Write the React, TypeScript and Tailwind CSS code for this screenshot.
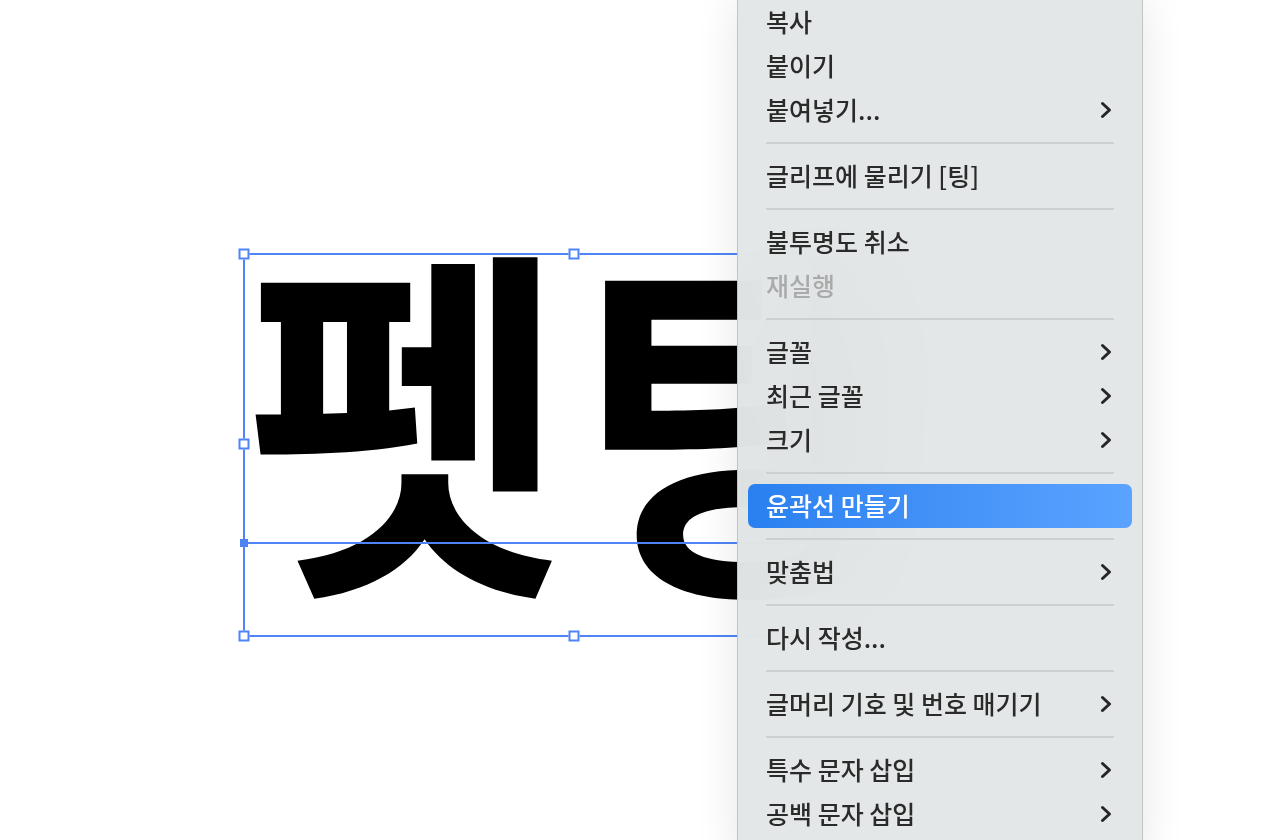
import React from "react";

type Item =
  | { kind: "item"; label: string; sub?: boolean; disabled?: boolean; active?: boolean }
  | { kind: "sep" };

const items: Item[] = [
  { kind: "item", label: "복사" },
  { kind: "item", label: "붙이기" },
  { kind: "item", label: "붙여넣기...", sub: true },
  { kind: "sep" },
  { kind: "item", label: "글리프에 물리기 [팅]" },
  { kind: "sep" },
  { kind: "item", label: "불투명도 취소" },
  { kind: "item", label: "재실행", disabled: true },
  { kind: "sep" },
  { kind: "item", label: "글꼴", sub: true },
  { kind: "item", label: "최근 글꼴", sub: true },
  { kind: "item", label: "크기", sub: true },
  { kind: "sep" },
  { kind: "item", label: "윤곽선 만들기", active: true },
  { kind: "sep" },
  { kind: "item", label: "맞춤법", sub: true },
  { kind: "sep" },
  { kind: "item", label: "다시 작성..." },
  { kind: "sep" },
  { kind: "item", label: "글머리 기호 및 번호 매기기", sub: true },
  { kind: "sep" },
  { kind: "item", label: "특수 문자 삽입", sub: true },
  { kind: "item", label: "공백 문자 삽입", sub: true },
];

function Chevron() {
  return (
    <svg width="12" height="18" viewBox="0 0 12 18" fill="none">
      <path d="M2.5 2.5 L9.5 9 L2.5 15.5" stroke="#262626" strokeWidth="3" strokeLinecap="round" strokeLinejoin="round" />
    </svg>
  );
}

// 선택 상자 핸들 (캔버스 위 자유 배치)
function Handle({ className, filled }: { className: string; filled?: boolean }) {
  return (
    <div
      className={
        (filled
          ? "absolute w-[8px] h-[8px] bg-[#4f84f7] -translate-x-1/2 -translate-y-1/2 "
          : "absolute w-[11px] h-[11px] bg-white border-2 border-[#4f84f7] -translate-x-1/2 -translate-y-1/2 ") + className
      }
    />
  );
}

function ContextMenu() {
  return (
    <div className="absolute left-[737px] top-0 w-[406px] h-[860px] bg-[#e3e6e6]/[0.97] backdrop-blur-3xl border-x border-[#c2c4c4] shadow-[0_0_40px_rgba(0,0,0,0.1)] px-[10px] text-[25px] font-medium">
      {items.map((it, i) =>
        it.kind === "sep" ? (
          <div key={i} className="h-[22px] flex items-center px-[18px]">
            <div className="h-[2px] w-full bg-[#cdd0d0]" />
          </div>
        ) : (
          <div
            key={i}
            className={
              it.active
                ? "h-[44px] flex items-center justify-between pl-[18px] pr-[20px] rounded-[7px] bg-gradient-to-r from-[#2a80f0] to-[#5aa3ff] text-white"
                : it.disabled
                ? "h-[44px] flex items-center justify-between pl-[18px] pr-[20px] text-[#a9abab]"
                : "h-[44px] flex items-center justify-between pl-[18px] pr-[20px] text-[#2a2a2a]"
            }
          >
            <span>{it.label}</span>
            {it.sub && <Chevron />}
          </div>
        )
      )}
    </div>
  );
}

export default function App() {
  return (
    <div
      className="relative w-[1278px] h-[840px] overflow-hidden bg-white"
      style={{ fontFamily: '"Noto Sans CJK KR", "Noto Sans", sans-serif' }}
    >
      {/* 캔버스 위 텍스트 */}
      <div className="absolute left-[244px] top-[221px] text-[370px] leading-none font-bold text-black whitespace-nowrap tracking-[6px] origin-left scale-x-[0.95]">
        펫팅
      </div>
      {/* 선택 상자 */}
      <div className="absolute left-[243px] top-[253px] w-[663px] h-[384px] border-2 border-[#4f84f7]">
        <div className="absolute left-0 right-0 top-[287px] h-[2px] bg-[#4f84f7]" />
        <Handle className="left-[-1px] top-[-1px]" />
        <Handle className="left-[329px] top-[-1px]" />
        <Handle className="left-[-1px] top-[189px]" />
        <Handle className="left-[-1px] top-[381px]" />
        <Handle className="left-[329px] top-[381px]" />
        <Handle className="left-[-1px] top-[288px]" filled />
      </div>

      <ContextMenu />
    </div>
  );
}
